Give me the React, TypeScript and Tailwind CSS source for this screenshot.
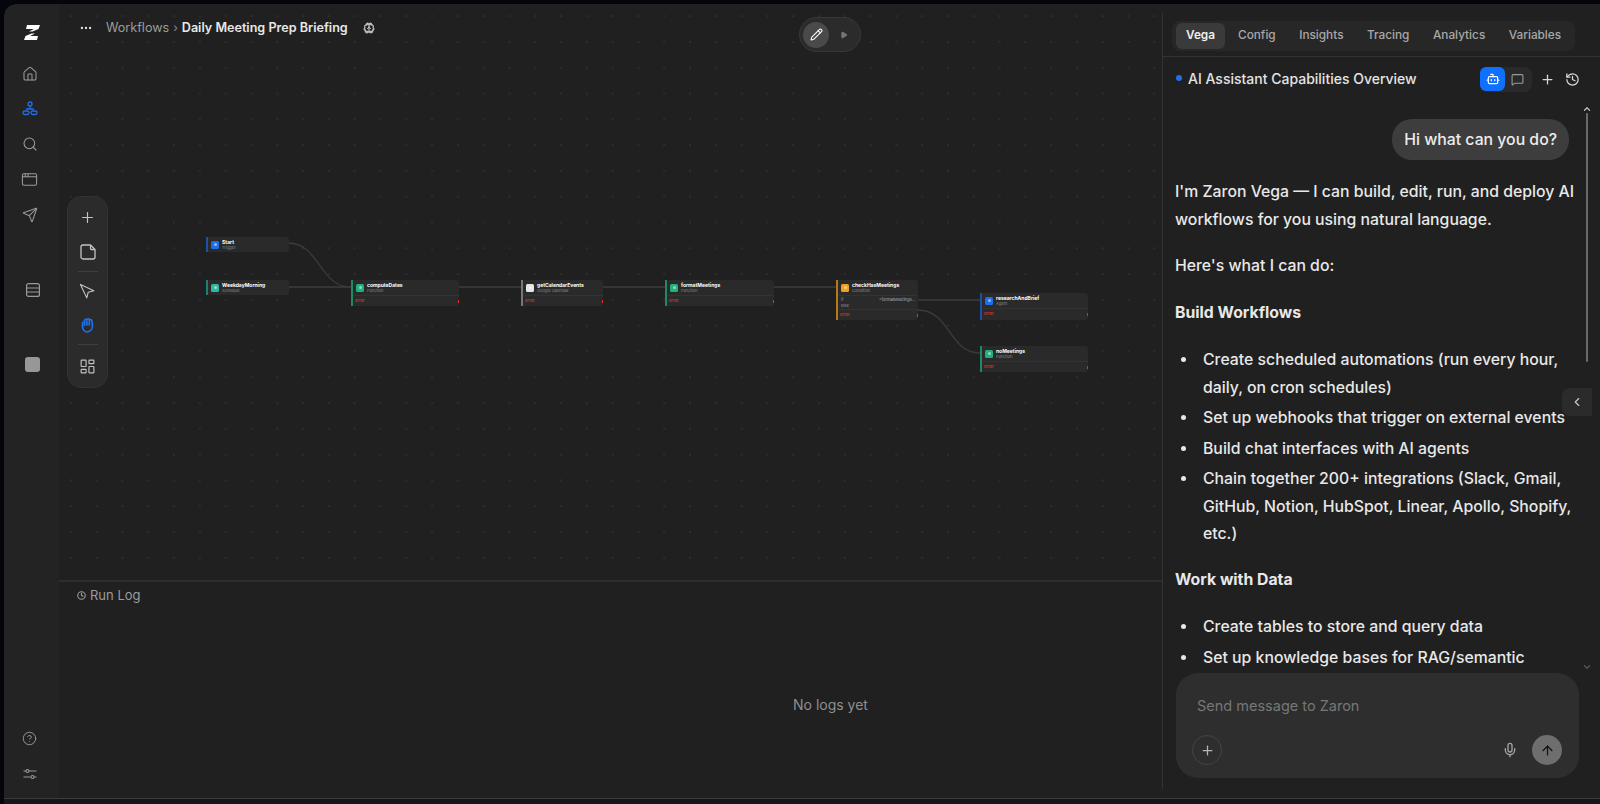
import React from "react";
import {
  AppWindow,
  ArrowUp,
  Bot,
  Brain,
  ChevronDown,
  ChevronLeft,
  ChevronUp,
  Clock,
  History,
  House,
  LayoutDashboard,
  CircleHelp,
  MessageSquare,
  Mic,
  MoreHorizontal,
  Navigation,
  Pencil,
  Play,
  Plus,
  Search,
  Send,
} from "lucide-react";

const font = "font-['Inter','Liberation_Sans',sans-serif]";

const Logo = () => (
  <svg width="16" height="15" viewBox="0 0 16 15" fill="#fff">
    <path d="M3 0h13l-1.5 4-6 2.5H5L10 4H2z" />
    <path d="M13 15H0l1.5-4 6-2.5H11L6 11h8z" />
  </svg>
);

const WorkflowIcon = () => (
  <svg width="16" height="15" viewBox="0 0 16 15" fill="none" stroke="#1f6fe8" strokeWidth="1.3">
    <circle cx="8" cy="3" r="2" />
    <path d="M8 5v3M4 8h8" />
    <rect x="1" y="10" width="6" height="3.5" rx="1.7" />
    <rect x="9" y="10" width="6" height="3.5" rx="1.7" />
  </svg>
);

const TableIcon = () => (
  <svg width="14" height="14" viewBox="0 0 14 14" fill="none" stroke="#9a9a9a" strokeWidth="1.2">
    <rect x="0.6" y="0.6" width="12.8" height="12.8" rx="2" />
    <path d="M1 5h12M1 9h12" />
  </svg>
);

const SlidersIcon = () => (
  <svg width="14" height="12" viewBox="0 0 14 12" fill="none" stroke="#9a9a9a" strokeWidth="1.1">
    <path d="M0.5 3h2.5M6 3h7.5M0.5 9h7M11 9h2.5" />
    <circle cx="4.5" cy="3" r="1.5" />
    <circle cx="9.5" cy="9" r="1.5" />
  </svg>
);

const NoteIcon = () => (
  <svg width="16" height="16" viewBox="0 0 16 16" fill="none" stroke="#c4c4c4" strokeWidth="1.3" className="mt-[18px]">
    <path d="M3 1h7.5L15 5.5V13a2 2 0 0 1-2 2H3a2 2 0 0 1-2-2V3a2 2 0 0 1 2-2z" />
    <path d="M10.5 1.5v3.2a.8.8 0 0 0 .8.8h3.2" />
  </svg>
);

const HandIcon = () => (
  <svg width="13" height="15" viewBox="0 0 13 15" fill="none" stroke="#1f6fe8" strokeWidth="1.7" strokeLinecap="round" className="mt-[18px]">
    <path d="M1.5 5.5a1.2 1.2 0 0 1 2-.9V2.6a1.2 1.2 0 0 1 2.4 0V2a1.2 1.2 0 0 1 2.4 0v.8a1.2 1.2 0 0 1 2.4 0c.5 1.5.8 3 .8 5.2a6 6 0 0 1-5.3 6 5.3 5.3 0 0 1-4.7-5.3z" />
    <path d="M3.5 5v2.5M5.9 3v4M8.3 3v4" />
  </svg>
);

const SideSlot = ({ className, children }: { className: string; children: React.ReactNode }) => (
  <div className={`flex justify-center ${className}`}>{children}</div>
);

const Sidebar = () => (
  <div className="flex w-[55px] shrink-0 flex-col items-stretch rounded-tl-xl bg-[#232323] pt-[21px] pb-[18px]">
    <SideSlot className="h-[15px] pl-[1px]">
      <Logo />
    </SideSlot>
    <SideSlot className="mt-[26px] -ml-[4px]">
      <House size={16} color="#9a9a9a" strokeWidth={1.6} />
    </SideSlot>
    <SideSlot className="mt-[19px] -ml-[4px]">
      <WorkflowIcon />
    </SideSlot>
    <SideSlot className="mt-[20px] -ml-[4px]">
      <Search size={16} color="#9a9a9a" strokeWidth={1.6} />
    </SideSlot>
    <SideSlot className="mt-[19px] -ml-[4px]">
      <AppWindow size={17} color="#9a9a9a" strokeWidth={1.5} />
    </SideSlot>
    <SideSlot className="mt-[19px] -ml-[4px]">
      <Send size={16} color="#9a9a9a" strokeWidth={1.6} />
    </SideSlot>
    <SideSlot className="mt-[60px] pl-[2px]">
      <TableIcon />
    </SideSlot>
    <SideSlot className="mt-[60px] pl-[2px]">
      <div className="h-[15px] w-[15px] rounded-[3px] bg-[#979797]" />
    </SideSlot>
    <div className="flex-1" />
    <SideSlot className="-ml-[4px]">
      <CircleHelp size={15} color="#9a9a9a" strokeWidth={1.5} />
    </SideSlot>
    <SideSlot className="mt-[22px] -ml-[4px]">
      <SlidersIcon />
    </SideSlot>
  </div>
);

interface WorkflowNodeProps {
  className: string;
  bar: string;
  tile: string;
  name: string;
  kind: string;
  hasError?: boolean;
  children?: React.ReactNode;
}

const WorkflowNode = ({ className, bar, tile, name, kind, hasError, children }: WorkflowNodeProps) => (
  <div className={`absolute flex rounded-r-[3px] bg-[#2a2a2a] ${className}`}>
    <div className={`w-[2px] shrink-0 ${bar}`} />
    <div className="flex min-w-0 flex-1 flex-col">
      <div className="flex h-[15px] items-center gap-[3px] pl-[3px]">
        <div className={`flex h-[8px] w-[8px] shrink-0 items-center justify-center rounded-[1.5px] ${tile}`}>
          <div className="h-[3px] w-[3px] rounded-full bg-white/50" />
        </div>
        <div className="leading-none">
          <div className="text-[5px] leading-[6px] font-bold text-white">{name}</div>
          <div className="text-[4px] leading-[5px] text-[#8a8a8a]">{kind}</div>
        </div>
      </div>
      {children}
      {hasError && (
        <div className="flex h-[11px] items-center justify-between border-t border-[#333]">
          <span className="pl-[2px] text-[4px] font-semibold text-[#d9342b]">error</span>
          <span className="h-[3px] w-[1px] bg-[#d9342b]" />
        </div>
      )}
    </div>
  </div>
);

const Canvas = () => (
  <div className="relative h-[576px] shrink-0 bg-[#202020] bg-[radial-gradient(#2d2d2d_0.7px,transparent_0.8px)] bg-[size:25.8px_25.8px] bg-[position:-1px_25px]">
    {/* header */}
    <div className="flex items-center pt-[15px] pl-[20px] text-[12.6px]">
      <MoreHorizontal size={14} color="#e5e5e5" />
      <span className="ml-[13px] text-[#9c9c9c]">Workflows</span>
      <span className="mx-[4px] text-[12px] text-[#8a8a8a]">›</span>
      <span className="font-semibold text-[#e8e8e8]">Daily Meeting Prep Briefing</span>
      <Brain size={12} fill="#bdbdbd" color="#bdbdbd" className="ml-[15px]" />
    </div>

    {/* edit / run pill */}
    <div className="absolute top-[13px] left-[740px] flex h-[35px] w-[62px] items-center rounded-full border border-[#383838] bg-[#2b2b2b] pl-[3px]">
      <div className="flex h-[26px] w-[26px] items-center justify-center rounded-full bg-[#4a4a4a]">
        <Pencil size={13} color="#fff" strokeWidth={2} />
      </div>
      <Play size={8} fill="#777" color="#777" className="ml-[11px]" />
    </div>

    {/* tools */}
    <div className="absolute top-[192px] left-[8px] flex h-[192px] w-[41px] flex-col items-center rounded-[14px] border border-[#333] bg-[#2b2b2b] pt-[12px]">
      <Plus size={17} color="#c4c4c4" strokeWidth={1.6} />
      <NoteIcon />
      <div className="mt-[11px] h-px w-[20px] bg-[#3f3f3f]" />
      <Navigation size={17} color="#c4c4c4" strokeWidth={1.6} className="mt-[11px] -rotate-90" />
      <HandIcon />
      <div className="mt-[11px] h-px w-[20px] bg-[#3f3f3f]" />
      <LayoutDashboard size={17} color="#c4c4c4" strokeWidth={1.6} className="mt-[13px]" />
    </div>

    {/* edges */}
    <svg className="absolute top-0 left-0" width="1103" height="576" fill="none" stroke="#3c3c3c" strokeWidth="1.3">
      <path d="M229 239c32 0 31 44 63 44" />
      <path d="M229 283h63" />
      <path d="M400 283h62" />
      <path d="M544 283h62" />
      <path d="M715 283h62" />
      <path d="M859 296h62" />
      <path d="M859 306c32 0 31 43 62 43" />
    </svg>

    {/* nodes */}
    <WorkflowNode className="top-[233px] left-[147px] h-[15px] w-[83px]" bar="bg-[#1d4fa8]" tile="bg-[#1f6fe8]" name="Start" kind="Trigger" />
    <WorkflowNode className="top-[276px] left-[147px] h-[15px] w-[83px]" bar="bg-[#1f7f70]" tile="bg-[#2fb8a0]" name="WeekdayMorning" kind="Schedule" />
    <WorkflowNode className="top-[276px] left-[292px] h-[26px] w-[108px]" bar="bg-[#1c8a63]" tile="bg-[#22b07d]" name="computeDates" kind="Function" hasError />
    <WorkflowNode className="top-[276px] left-[462px] h-[26px] w-[82px]" bar="bg-[#777]" tile="bg-[#e6e6e6]" name="getCalendarEvents" kind="Google Calendar" hasError />
    <WorkflowNode className="top-[276px] left-[606px] h-[26px] w-[109px]" bar="bg-[#1c8a63]" tile="bg-[#22b07d]" name="formatMeetings" kind="Function" hasError />
    <WorkflowNode className="top-[276px] left-[777px] h-[40px] w-[82px]" bar="bg-[#b57a12]" tile="bg-[#f0a020]" name="checkHasMeetings" kind="Condition" hasError>
      <div className="flex h-[7px] items-end justify-between border-t border-[#333] px-[3px] text-[4px] leading-[5px] text-[#9a9a9a]">
        <span>if</span>
        <span className="text-[#b5b5b5]">&lt;formatMeetings...</span>
      </div>
      <div className="h-[7px] px-[3px] text-[4px] leading-[7px] text-[#9a9a9a]">else</div>
    </WorkflowNode>
    <WorkflowNode className="top-[289px] left-[921px] h-[27px] w-[108px]" bar="bg-[#1d4fa8]" tile="bg-[#1f6fe8]" name="researchAndBrief" kind="Agent" hasError />
    <WorkflowNode className="top-[342px] left-[921px] h-[26px] w-[108px]" bar="bg-[#1c8a63]" tile="bg-[#22b07d]" name="noMeetings" kind="Function" hasError />
  </div>
);

const RunLog = () => (
  <div className="flex min-h-0 flex-1 flex-col border-t-2 border-[#2e2e2e] bg-[#202020]">
    <div className="flex items-center gap-[4px] pt-[4px] pl-[18px] text-[13px] text-[#9c9c9c]">
      <Clock size={9} strokeWidth={3} />
      <span>Run Log</span>
    </div>
    <div className="flex flex-1 items-center justify-center pt-[5px] pl-[440px] text-[14px] text-[#8f8f8f]">No logs yet</div>
  </div>
);

const tabs = ["Config", "Insights", "Tracing", "Analytics", "Variables"];

const Bullets = ({ items }: { items: string[] }) => (
  <ul className="mt-[20px] flex flex-col gap-[3px] pl-[28px]">
    {items.map((item) => (
      <li key={item} className="relative">
        <span className="absolute top-[11px] -left-[22px] h-[5px] w-[5px] rounded-full bg-[#e8e8e8]" />
        {item}
      </li>
    ))}
  </ul>
);

const ChatPanel = () => (
  <div className="flex w-[438px] shrink-0 flex-col bg-[#202020] py-[9px]">
    <div className="flex h-full flex-col border-l border-[#343434]">
      <div className="h-[44px] shrink-0 border-b border-[#333] pt-[8px] pr-[3px] pl-[9px]">
        <div className="flex h-[30px] w-[403px] items-center rounded-lg bg-[#272727] pl-[4px] text-[11.8px] font-medium text-[#a8a8a8]">
          <span className="flex h-[26px] w-[49px] items-center justify-center rounded-md bg-[#3a3a3a] font-semibold text-[#f0f0f0]">Vega</span>
          <div className="ml-[13px] flex gap-[23.5px]">
            {tabs.map((t) => (
              <span key={t}>{t}</span>
            ))}
          </div>
        </div>
      </div>

      <div className="flex h-[42px] shrink-0 items-center pr-[20px] pl-[13px]">
        <span className="h-[6px] w-[6px] rounded-full bg-[#1f6fe8]" />
        <span className="ml-[6px] text-[14px] font-medium text-[#e4e4e4]">AI Assistant Capabilities Overview</span>
        <div className="mt-[2px] ml-auto flex h-[25px] w-[52px] items-center rounded-lg bg-[#2a2a2a]">
          <div className="flex h-[24px] w-[25px] items-center justify-center rounded-md bg-[#0f6fff]">
            <Bot size={14} color="#fff" strokeWidth={2} />
          </div>
          <MessageSquare size={13} color="#9a9a9a" className="ml-[6px]" />
        </div>
        <Plus size={15} color="#d8d8d8" className="mt-[2px] ml-[8px]" />
        <History size={15} color="#d8d8d8" strokeWidth={2} className="mt-[2px] ml-[10px]" />
      </div>

      <div className="relative min-h-0 flex-1 overflow-hidden pt-[20px] pr-[24px] pl-[12px] text-[15.8px] leading-[27.5px] font-medium text-[#e8e8e8]">
        <div className="flex justify-end pr-[7px]">
          <div className="flex h-[41px] items-center rounded-[20px] bg-[#3d3d3d] px-[12px] text-[#ececec]">Hi what can you do?</div>
        </div>
        <p className="mt-[18px]">I'm Zaron Vega — I can build, edit, run, and deploy AI workflows for you using natural language.</p>
        <p className="mt-[19px]">Here's what I can do:</p>
        <p className="mt-[19px] font-bold">Build Workflows</p>
        <Bullets
          items={[
            "Create scheduled automations (run every hour, daily, on cron schedules)",
            "Set up webhooks that trigger on external events",
            "Build chat interfaces with AI agents",
            "Chain together 200+ integrations (Slack, Gmail, GitHub, Notion, HubSpot, Linear, Apollo, Shopify, etc.)",
          ]}
        />
        <p className="mt-[18px] font-bold">Work with Data</p>
        <Bullets items={["Create tables to store and query data", "Set up knowledge bases for RAG/semantic"]} />

        {/* scrollbar */}
        <ChevronUp size={10} strokeWidth={3} color="#bdbdbd" className="absolute top-[5px] right-[8px]" />
        <div className="absolute top-[14px] right-[12px] h-[249px] w-[2px] rounded bg-[#6a6a6a]" />
        <ChevronDown size={10} strokeWidth={3} color="#555" className="absolute right-[8px] bottom-[1px]" />
      </div>

      <div className="mx-[13px] flex h-[105px] w-[403px] shrink-0 flex-col rounded-[22px] bg-[#2e2e2e] pt-[23px] pr-[17px] pb-[13px] pl-[21px]">
        <div className="text-[14.5px] leading-[20px] text-[#777]">Send message to Zaron</div>
        <div className="mt-auto flex items-center">
          <div className="-ml-[5px] flex h-[30px] w-[30px] items-center justify-center rounded-full border border-[#444]">
            <Plus size={15} color="#b5b5b5" />
          </div>
          <Mic size={16} color="#a5a5a5" className="mr-[14px] ml-auto" />
          <div className="flex h-[30px] w-[30px] items-center justify-center rounded-full bg-[#6e6e6e]">
            <ArrowUp size={15} color="#111" />
          </div>
        </div>
      </div>
      <div className="h-[11px] shrink-0" />
    </div>
  </div>
);

export default function App() {
  return (
    <div className={`relative flex h-[804px] w-[1600px] flex-col overflow-hidden bg-[#05050c] pt-[4px] pl-[4px] ${font}`}>
      <div className="flex min-h-0 flex-1 overflow-hidden rounded-tl-xl">
        <Sidebar />
        <div className="flex min-w-0 flex-1 flex-col">
          <Canvas />
          <RunLog />
        </div>
        <ChatPanel />
      </div>
      <div className="h-[6px] shrink-0 border-t border-[#3a3a3a] bg-[#17171a]" />
      <div className="absolute top-[388px] right-[8px] flex h-[28px] w-[30px] items-center justify-center rounded-l-lg bg-[#2b2b2b]">
        <ChevronLeft size={14} color="#c8c8c8" />
      </div>
    </div>
  );
}
